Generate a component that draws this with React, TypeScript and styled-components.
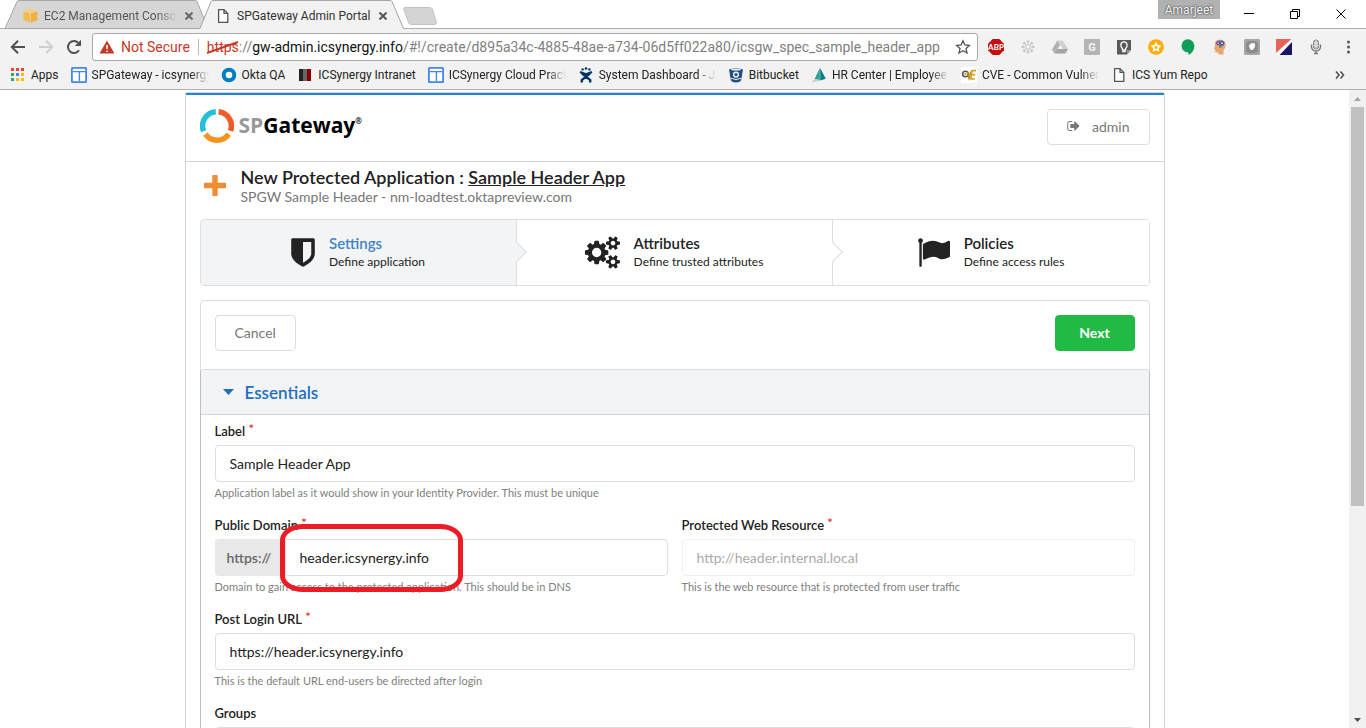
import React from 'react';
import styled, { createGlobalStyle, css } from 'styled-components';

const uiFont = 'Roboto, "Liberation Sans", sans-serif';
const pageFont = 'Lato, "Liberation Sans", sans-serif';

const GlobalStyle = createGlobalStyle`
  *, *::before, *::after { box-sizing: border-box; }
  body { margin: 0; background: #fff; }
  button, input { font: inherit; color: inherit; margin: 0; }
  svg { display: block; flex: none; }
`;

const Window = styled.div`
  display: flex;
  flex-direction: column;
  height: 100vh;
  min-height: 480px;
  overflow: hidden;
  background: #fff;
  font-family: ${uiFont};
`;

/* ---------- browser frame ---------- */

const TabStrip = styled.div`
  display: flex;
  justify-content: space-between;
  height: 29px;
  border-bottom: 1px solid #b0b0b0;
  flex: none;
`;

const Tabs = styled.div`
  display: flex;
  padding-left: 5px;
`;

const Tab = styled.div<{ $active?: boolean }>`
  position: relative;
  z-index: ${p => (p.$active ? 2 : 1)};
  display: flex;
  align-items: center;
  width: 208px;
  height: 29px;
  padding: 2px 16px 0 ${p => (p.$active ? '16px' : '18px')};
  margin-right: -14px;
  font-size: 12px;
  color: ${p => (p.$active ? '#333' : '#555')};
`;

const TabShape = styled.svg`
  position: absolute;
  inset: 0;
  z-index: -1;
`;

const TabTitle = styled.span<{ $fade?: boolean }>`
  flex: 1;
  min-width: 0;
  margin-left: 6px;
  overflow: hidden;
  white-space: nowrap;
  ${p => p.$fade && css`margin-right: 4px; mask-image: linear-gradient(to right, #000 85%, transparent);`}
`;

const IconButton = styled.button`
  display: flex;
  align-items: center;
  justify-content: center;
  flex: none;
  width: 16px;
  height: 16px;
  padding: 0;
  border: 0;
  background: none;
`;

const NewTab = styled(IconButton)`
  width: 34px;
  height: 18px;
  margin: 7px 0 0 10px;
`;

const WindowControls = styled.div`
  display: flex;
  align-items: flex-start;
  padding-right: 2px;
`;

const UserBadge = styled.button`
  height: 19px;
  width: 62px;
  margin-right: 6px;
  padding: 0;
  border: 0;
  background: #b1b1b1;
  color: #fff;
  font-size: 12px;
  text-shadow: 0 0 2px #333, 0 0 1px #333;
`;

const WindowButton = styled(IconButton)`
  width: 46px;
  height: 27px;
`;

const Toolbar = styled.div`
  display: flex;
  align-items: center;
  height: 36px;
  padding: 0 10px;
  background: #f2f2f2;
  flex: none;
`;

const Nav = styled.div`
  display: flex;
  gap: 12px;
  margin-right: 10px;
`;

const AddressBar = styled.div`
  display: flex;
  align-items: center;
  flex: 1;
  min-width: 0;
  height: 28px;
  padding: 0 6px;
  border: 1px solid #a9a9a9;
  border-radius: 3px;
  background: #fff;
  font-size: 14px;
`;

const NotSecure = styled.span`
  flex: none;
  margin-left: 6px;
  padding-right: 8px;
  border-right: 1px solid #b8b8b8;
  color: #c53929;
  white-space: nowrap;
`;

const Url = styled.span`
  flex: 1;
  min-width: 0;
  margin-left: 8px;
  overflow: hidden;
  white-space: nowrap;
  color: #808080;
  b { font-weight: 400; color: #111; }
`;

const Scheme = styled.span`
  display: inline-block;
  position: relative;
  color: #c53929;
`;

const Strike = styled.svg`
  position: absolute;
  left: -1px;
  top: 0;
`;

const Extensions = styled.div`
  display: flex;
  gap: 16px;
  margin-left: 10px;
`;

const Bookmarks = styled.nav`
  display: flex;
  align-items: center;
  height: 25px;
  padding: 0 20px 4px 9px;
  border-bottom: 1px solid #b0b0b0;
  background: #f2f2f2;
  flex: none;
`;

const Bookmark = styled.a<{ $wide?: boolean }>`
  display: flex;
  align-items: center;
  flex: none;
  gap: 5px;
  margin-right: 12px;
  color: #222;
  font-size: 12px;
  line-height: 16px;
  text-decoration: none;
  white-space: nowrap;
  span {
    overflow: hidden;
    ${p => p.$wide && css`width: 117px; mask-image: linear-gradient(to right, #000 84%, transparent);`}
  }
`;

const More = styled.button`
  margin-left: auto;
  padding: 0;
  border: 0;
  background: none;
  color: #444;
`;

const Viewport = styled.div`
  display: flex;
  flex: 1;
  min-height: 0;
`;

const Page = styled.main`
  flex: 1;
  min-width: 0;
  overflow: hidden;
  padding-top: 2px;
  font-family: ${pageFont};
  font-size: 14px;
  color: #222;
`;

const Scrollbar = styled.div`
  display: flex;
  flex-direction: column;
  align-items: center;
  width: 17px;
  background: #f1f1f1;
`;

const ScrollTrack = styled.div`
  flex: 1;
  width: 13px;
`;

const ScrollThumb = styled.div`
  height: 66%;
  background: #c1c1c1;
`;

const ScrollArrow = styled(IconButton)`
  width: 17px;
  height: 17px;
`;

/* ---------- application ---------- */

const Card = styled.div`
  width: 980px;
  max-width: calc(100% - 28px);
  margin: 0 auto;
  border: 1px solid #d4d4d5;
  border-radius: 3px;
`;

const AppHeader = styled.header`
  display: flex;
  align-items: flex-start;
  justify-content: space-between;
  padding: 14px 14px 16px;
  border-top: 2px solid #2185d0;
  border-bottom: 1px solid #d4d4d5;
`;

const Brand = styled.div`
  display: flex;
  align-items: flex-start;
  height: 34px;
  font: 700 21px/32px "Open Sans", sans-serif;
  color: #000;
  span { margin-left: 5px; color: #999; }
  sup { margin-top: 8px; font-size: 8px; line-height: 8px; }
`;

const Button = styled.button<{ $primary?: boolean }>`
  display: flex;
  align-items: center;
  justify-content: center;
  gap: 12px;
  min-width: 80px;
  height: 36px;
  padding: 0 19px 2px;
  border: 1px solid ${p => (p.$primary ? '#21ba45' : '#dedede')};
  border-radius: 4px;
  background: ${p => (p.$primary ? '#21ba45' : '#fff')};
  color: ${p => (p.$primary ? '#fff' : '#777')};
  font-weight: ${p => (p.$primary ? 700 : 400)};
`;

const TitleRow = styled.div`
  display: flex;
  align-items: center;
  gap: 15px;
  padding: 4px 18px 13px;
`;

const Title = styled.h1`
  margin: 0;
  font-size: 18px;
  line-height: 22px;
  font-weight: 600;
`;

const Subtitle = styled.p`
  margin: 0;
  line-height: 18px;
  color: #777;
`;

const Body = styled.div`
  padding: 0 14px 14px;
`;

const Steps = styled.nav`
  display: grid;
  grid-template-columns: repeat(3, 1fr);
  border: 1px solid #dededf;
  border-radius: 4px;
  overflow: hidden;
`;

const Step = styled.a<{ $active?: boolean }>`
  position: relative;
  display: flex;
  align-items: center;
  justify-content: center;
  gap: 14px;
  height: 65px;
  border-right: 1px solid #dededf;
  background: ${p => (p.$active ? '#f3f4f5' : '#fff')};
  color: #222;
  text-decoration: none;
  &:last-child { border-right: 0; }
  &:not(:last-child)::after {
    content: '';
    position: absolute;
    z-index: 1;
    top: 25px;
    right: -8px;
    width: 14px;
    height: 14px;
    border: solid #dededf;
    border-width: 1px 1px 0 0;
    background: inherit;
    transform: rotate(45deg);
  }
  strong {
    display: block;
    margin-bottom: 1px;
    font-size: 15px;
    line-height: 18px;
    font-weight: 600;
    color: ${p => (p.$active ? '#4183c4' : '#222')};
  }
  small { display: block; font-size: 12px; line-height: 18px; }
`;

const Segment = styled.section`
  margin-top: 14px;
  border: 1px solid #dededf;
  border-radius: 4px;
`;

const Actions = styled.div`
  display: flex;
  justify-content: space-between;
  padding: 14px 14px 18px;
`;

const Panel = styled.div`
  margin: 0 -1px;
  border: 1px solid #bdbdbf;
  border-top-color: #dededf;
  border-radius: 4px 4px 0 0;
`;

const PanelHead = styled.h2`
  margin: 0;
  border-bottom: 1px solid #d4d4d5;
  background: #f3f4f5;
  font-size: 17px;
  font-weight: 600;
  button {
    display: flex;
    align-items: center;
    gap: 11px;
    width: 100%;
    height: 44px;
    padding: 0 22px;
    border: 0;
    background: none;
    color: #1e70bf;
  }
`;

const Form = styled.form`
  display: grid;
  grid-template-columns: 1fr 1fr;
  gap: 12px 14px;
  padding: 7px 14px;
`;

const FieldBox = styled.div<{ $full?: boolean }>`
  position: relative;
  min-width: 0;
  ${p => p.$full && css`grid-column: 1 / -1;`}
  label {
    display: block;
    height: 19px;
    margin-bottom: 4px;
    font-size: 13px;
    line-height: 19px;
    font-weight: 600;
  }
  label sup { color: #db2828; line-height: 0; font-size: 14px; font-weight: 400; vertical-align: 2px; margin-left: 3px; }
  p {
    margin: 0;
    font-size: 11px;
    line-height: 22px;
    color: #808080;
    white-space: nowrap;
  }
`;

const InputRow = styled.div`
  display: flex;
  height: 37px;
`;

const Prefix = styled.span`
  display: flex;
  align-items: center;
  width: 70px;
  padding-left: 12px;
  border-radius: 4px 0 0 4px;
  background: #e8e8e8;
  color: #666;
  font-weight: 600;
`;

const Input = styled.input<{ $joined?: boolean; $faint?: boolean }>`
  flex: 1;
  min-width: 0;
  padding: 0 14px;
  border: 1px solid ${p => (p.$faint ? '#eee' : '#dededf')};
  border-radius: ${p => (p.$joined ? '0 4px 4px 0' : '4px')};
  background: #fff;
  color: #222;
  outline: 0;
  &::placeholder { color: #aaa; opacity: 1; }
`;

const Highlight = styled.div`
  position: absolute;
  left: 65px;
  top: 8px;
  width: 183px;
  height: 68px;
  border: 5px solid #ed1c24;
  border-radius: 23px / 16px;
  pointer-events: none;
`;

/* ---------- drawings ---------- */

const glyphs = {
  shield: {
    w: 1280,
    d: 'M1088 576v640h-448v-1137q119 63 213 137q235 184 235 360zM1280 1344v-768q0 -86 -33.5 -170.5t-83 -150t-118 -127.5t-126.5 -103t-121 -77.5t-89.5 -49.5t-42.5 -20q-12 -6 -26 -6t-26 6q-16 7 -42.5 20t-89.5 49.5t-121 77.5t-126.5 103t-118 127.5t-83 150t-33.5 170.5v768q0 26 19 45t45 19h1152q26 0 45 -19t19 -45z',
  },
  cogs: {
    w: 1920,
    d: 'M896 640q0 106 -75 181t-181 75t-181 -75t-75 -181t75 -181t181 -75t181 75t75 181zM1664 128q0 52 -38 90t-90 38t-90 -38t-38 -90q0 -53 37.5 -90.5t90.5 -37.5t90.5 37.5t37.5 90.5zM1664 1152q0 52 -38 90t-90 38t-90 -38t-38 -90q0 -53 37.5 -90.5t90.5 -37.5t90.5 37.5t37.5 90.5zM1280 731v-185q0 -10 -7 -19.5t-16 -10.5l-155 -24q-11 -35 -32 -76q34 -48 90 -115q7 -11 7 -20q0 -12 -7 -19q-23 -30 -82.5 -89.5t-78.5 -59.5q-11 0 -21 7l-115 90q-37 -19 -77 -31q-11 -108 -23 -155q-7 -24 -30 -24h-186q-11 0 -20 7.5t-10 17.5l-23 153q-34 10 -75 31l-118 -89q-7 -7 -20 -7q-11 0 -21 8q-144 133 -144 160q0 9 7 19q10 14 41 53t47 61q-23 44 -35 82l-152 24q-10 1 -17 9.5t-7 19.5v185q0 10 7 19.5t16 10.5l155 24q11 35 32 76q-34 48 -90 115q-7 11 -7 20q0 12 7 20q22 30 82 89t79 59q11 0 21 -7l115 -90q34 18 77 32q11 108 23 154q7 24 30 24h186q11 0 20 -7.5t10 -17.5l23 -153q34 -10 75 -31l118 89q8 7 20 7q11 0 21 -8q144 -133 144 -160q0 -8 -7 -19q-12 -16 -42 -54t-45 -60q23 -48 34 -82l152 -23q10 -2 17 -10.5t7 -19.5zM1920 198v-140q0 -16 -149 -31q-12 -27 -30 -52q51 -113 51 -138q0 -4 -4 -7q-122 -71 -124 -71q-8 0 -46 47t-52 68q-20 -2 -30 -2t-30 2q-14 -21 -52 -68t-46 -47q-2 0 -124 71q-4 3 -4 7q0 25 51 138q-18 25 -30 52q-149 15 -149 31v140q0 16 149 31q13 29 30 52q-51 113 -51 138q0 4 4 7q4 2 35 20t59 34t30 16q8 0 46 -46.5t52 -67.5q20 2 30 2t30 -2q51 71 92 112l6 2q4 0 124 -70q4 -3 4 -7q0 -25 -51 -138q17 -23 30 -52q149 -15 149 -31zM1920 1222v-140q0 -16 -149 -31q-12 -27 -30 -52q51 -113 51 -138q0 -4 -4 -7q-122 -71 -124 -71q-8 0 -46 47t-52 68q-20 -2 -30 -2t-30 2q-14 -21 -52 -68t-46 -47q-2 0 -124 71q-4 3 -4 7q0 25 51 138q-18 25 -30 52q-149 15 -149 31v140q0 16 149 31q13 29 30 52q-51 113 -51 138q0 4 4 7q4 2 35 20t59 34t30 16q8 0 46 -46.5t52 -67.5q20 2 30 2t30 -2q51 71 92 112l6 2q4 0 124 -70q4 -3 4 -7q0 -25 -51 -138q17 -23 30 -52q149 -15 149 -31z',
  },
  flag: {
    w: 1792,
    d: 'M320 1280q0 -72 -64 -110v-1266q0 -13 -9.5 -22.5t-22.5 -9.5h-64q-13 0 -22.5 9.5t-9.5 22.5v1266q-64 38 -64 110q0 53 37.5 90.5t90.5 37.5t90.5 -37.5t37.5 -90.5zM1792 1216v-763q0 -25 -12.5 -38.5t-39.5 -27.5q-215 -116 -369 -116q-61 0 -123.5 22t-108.5 48t-115.5 48t-142.5 22q-192 0 -464 -146q-17 -9 -33 -9q-26 0 -45 19t-19 45v742q0 32 31 55q21 14 79 43q236 120 421 120q107 0 200 -29t219 -88q38 -19 88 -19q54 0 117.5 21t110 47t88 47t54.5 21q26 0 45 -19t19 -45z',
  },
  signOut: {
    w: 1600,
    d: 'M640 96q0 -4 1 -20t0.5 -26.5t-3 -23.5t-10 -19.5t-20.5 -6.5h-320q-119 0 -203.5 84.5t-84.5 203.5v704q0 119 84.5 203.5t203.5 84.5h320q13 0 22.5 -9.5t9.5 -22.5q0 -4 1 -20t0.5 -26.5t-3 -23.5t-10 -19.5t-20.5 -6.5h-320q-66 0 -113 -47t-47 -113v-704q0 -66 47 -113t113 -47h288h11h13t11.5 -1t11.5 -3t8 -5.5t7 -9t2 -13.5zM1568 640q0 -26 -19 -45l-544 -544q-19 -19 -45 -19t-45 19t-19 45v288h-448q-26 0 -45 19t-19 45v384q0 26 19 45t45 19h448v288q0 26 19 45t45 19t45 -19l544 -544q19 -19 19 -45z',
  },
};

const Glyph = ({ name, size }: { name: keyof typeof glyphs; size: number }) => {
  const { w, d } = glyphs[name];
  return (
    <svg width={Math.round((w / 1792) * size)} height={size} viewBox={`0 -1536 ${w} 1792`} fill="currentColor" aria-hidden="true">
      <path transform="scale(1 -1)" d={d} />
    </svg>
  );
};

const Cross = ({ size, color, width = 2 }: { size: number; color: string; width?: number }) => (
  <svg width={size} height={size} viewBox={`0 0 ${size} ${size}`} stroke={color} strokeWidth={width}>
    <path d={`M.5 .5L${size - 0.5} ${size - 0.5}M${size - 0.5} .5L.5 ${size - 0.5}`} />
  </svg>
);

const PageIcon = () => (
  <svg width="16" height="16" viewBox="0 0 16 16" fill="#fff" stroke="#555" strokeWidth="1.3">
    <path d="M3.6 1.6H9l3.8 3.8v9H3.6zM9 1.6v3.8h3.8" />
  </svg>
);

const Layout = () => (
  <svg width="16" height="16" viewBox="0 0 16 16">
    <rect x="0.9" y="0.9" width="14.2" height="14.2" rx="0.6" fill="#fff" stroke="#4285f4" strokeWidth="1.8" />
    <path d="M2 4.6h12M8.4 4.6V14" stroke="#4285f4" strokeWidth="1.4" />
  </svg>
);

const AppsIcon = () => {
  const colors = ['#ea4335', '#ea4335', '#ea4335', '#34a853', '#4285f4', '#fbbc05', '#34a853', '#fbbc05', '#fbbc05'];
  return (
    <svg width="17" height="16" viewBox="0 0 17 16">
      {colors.map((c, i) => (
        <rect key={i} x={2 + (i % 3) * 5} y={1 + Math.floor(i / 3) * 5} width="3" height="3" fill={c} />
      ))}
    </svg>
  );
};

const Cube = () => (
  <svg width="15" height="15" viewBox="0 0 15 15">
    <path d="M.5 2.6L7.5.4l7 2.2-7 2z" fill="#f9cf77" />
    <path d="M.5 3.4l6.6 1.9v9.2L.5 12z" fill="#f5bd4e" />
    <path d="M14.5 3.4L7.9 5.3v9.2l6.600-2.500z" fill="#f1b13c" />
  </svg>
);

const bookmarks: { label: string; wide?: boolean; icon: React.ReactNode }[] = [
  { label: 'Apps', icon: <AppsIcon /> },
  { label: 'SPGateway - icsynergy', wide: true, icon: <Layout /> },
  {
    label: 'Okta QA',
    icon: (
      <svg width="16" height="16" viewBox="0 0 16 16"><circle cx="8" cy="8" r="5.3" fill="#fff" stroke="#007dc1" strokeWidth="4" /></svg>
    ),
  },
  {
    label: 'ICSynergy Intranet',
    icon: (
      <svg width="16" height="16" viewBox="0 0 16 16">
        <path d="M2 2h4v12H2z" fill="#222" /><path d="M6 2h4v12H6z" fill="#666" /><path d="M10 2h4v12h-4z" fill="#8b0000" />
      </svg>
    ),
  },
  { label: 'ICSynergy Cloud Pract', wide: true, icon: <Layout /> },
  {
    label: 'System Dashboard - JI',
    wide: true,
    icon: (
      <svg width="16" height="16" viewBox="0 0 16 16" fill="none" stroke="#003366" strokeWidth="2.4">
        <path d="M2 5L8 7.400 14 5M3.800 15.500V13L8 9.600 12 6.500M12.200 15.500V13L8 9.600 4 6.500" />
        <g fill="#003366" stroke="none"><circle cx="4.600" cy="2.400" r="1.200" /><circle cx="8" cy="1.500" r="1.300" /><circle cx="11.400" cy="2.400" r="1.200" /></g>
      </svg>
    ),
  },
  {
    label: 'Bitbucket',
    icon: (
      <svg width="16" height="16" viewBox="0 0 16 16">
        <path d="M1 2.5Q8-.5 15 2.5L13.6 11 12.8 14Q8 17 3.2 14L2.4 11z" fill="#205081" />
        <ellipse cx="8" cy="2.6" rx="5" ry="1" fill="#f2f2f2" />
        <circle cx="8" cy="7.6" r="2.4" fill="#205081" stroke="#f2f2f2" strokeWidth="1.4" />
        <path d="M2.8 11.2Q8 13.8 13.2 11.2" stroke="#f2f2f2" fill="none" />
      </svg>
    ),
  },
  {
    label: 'HR Center | Employee',
    wide: true,
    icon: (
      <svg width="16" height="16" viewBox="0 0 16 16">
        <path d="M8.8 1v12L3.6 12z" fill="#2aa198" /><path d="M9.2 1l5.6 10.8-5.6 1.6z" fill="#0b7f83" /><path d="M0 15.4l4-3.4 6 1.5z" fill="#c6ced3" />
      </svg>
    ),
  },
  {
    label: 'CVE - Common Vulner',
    wide: true,
    icon: (
      <svg width="16" height="16" viewBox="0 0 16 16" fill="none">
        <path d="M0 0h16v16H0z" fill="#fff" />
        <circle cx="4.4" cy="7" r="2.8" stroke="#5a5a4a" strokeWidth="1.6" />
        <path d="M6.4 5l1.6 6 2-6.4" stroke="#b99025" strokeWidth="1.8" />
        <path d="M15 3.6h-4l-1.2 8.2h4M10.6 7.6h3.6" stroke="#d6a52c" strokeWidth="1.8" />
        <circle cx="4.4" cy="7" r="1" fill="#b99025" />
      </svg>
    ),
  },
  { label: 'ICS Yum Repo', icon: <PageIcon /> },
];

const extensions: { name: string; icon: React.ReactNode }[] = [
  {
    name: 'Ad blocker',
    icon: (
      <svg width="16" height="16" viewBox="0 0 16 16">
        <path d="M4.7 0h6.6L16 4.7v6.6L11.3 16H4.7L0 11.3V4.7z" fill="#c70d0d" />
        <text x="8" y="10.700" textAnchor="middle" fontSize="8" fontWeight="700" fontFamily="Lato, sans-serif" fill="#fff">ABP</text>
      </svg>
    ),
  },
  {
    name: 'Flower',
    icon: (
      <svg width="16" height="16" viewBox="0 0 16 16" fill="#c8c8c8" stroke="#c8c8c8">
        <circle cx="8" cy="8" r="2" fill="#fff" />
        {[0, 45, 90, 135, 180, 225, 270, 315].map(a => (
          <g key={a} transform={`rotate(${a} 8 8)`}><path d="M8 6V3" /><circle cx="8" cy="2.800" r="1.400" stroke="none" /></g>
        ))}
      </svg>
    ),
  },
  {
    name: 'Drive',
    icon: (
      <svg width="16" height="16" viewBox="0 0 16 16">
        <path d="M5.4 1.5h5.2L16 10h-5z" fill="#cfcfcf" /><path d="M5.4 1.5L0 10.4l2.6 4.1L8 6z" fill="#b0b0b0" /><path d="M5.2 10H16l-2.6 4.5H2.6z" fill="#a4a4a4" />
      </svg>
    ),
  },
  {
    name: 'G',
    icon: (
      <svg width="16" height="16" viewBox="0 0 16 16">
        <rect width="16" height="16" rx="1" fill="#b5b5b5" />
        <text x="8" y="12" textAnchor="middle" fontSize="11" fontWeight="700" fontFamily="Roboto, sans-serif" fill="#f4f4f4">G</text>
      </svg>
    ),
  },
  {
    name: 'Keep',
    icon: (
      <svg width="16" height="16" viewBox="0 0 16 16">
        <path d="M1 1h14v10l-4 4.500H1z" fill="#5a5a5a" /><path d="M15 11l-4 4.500V11z" fill="#999" />
        <path d="M6.400 9.400Q4.600 8 4.900 6A3.100 3.100 0 0 1 11.100 6Q11.400 8 9.600 9.400V11H6.400zM6.200 12.700h3.600" fill="none" stroke="#fff" strokeWidth="1.300" />
      </svg>
    ),
  },
  {
    name: 'Star',
    icon: (
      <svg width="16" height="16" viewBox="0 0 16 16">
        <circle cx="8" cy="8" r="7.800" fill="#ffab00" />
        <path d="M8 2.6l1.7 3.5 3.8.5-2.8 2.7.7 3.8L8 11.300l-3.400 1.800.7-3.800-2.800-2.700 3.800-.5z" fill="#fff" />
        <path d="M8 6.200l.7 1.400 1.500.2-1.100 1 .3 1.500L8 9.600l-1.400.7.3-1.500-1.100-1 1.500-.2z" fill="#ffab00" />
      </svg>
    ),
  },
  {
    name: 'Chat',
    icon: (
      <svg width="16" height="16" viewBox="0 0 16 16"><path d="M7.800 .2a6.600 6.600 0 0 1 6.600 6.600C14.400 11 12 14.500 8.400 16v-2.600A6.600 6.600 0 1 1 7.800 .2z" fill="#0f9d58" /></svg>
    ),
  },
  {
    name: 'Thinking head',
    icon: (
      <svg width="16" height="16" viewBox="0 0 16 16">
        <path d="M3 3Q5 .5 9 .8 13.600 1.500 13.600 6 13.600 9 11.500 11v4.500H6.500l-.2-2H3.500L3 10.500 2 9.500 3 7z" fill="#eca470" />
        <path d="M4 3.500Q6 .5 10 1.200L12.800 3l-.8 4-3 .5-4.500-2z" fill="#9a8378" />
        <g fill="#eee" strokeWidth="1.200"><circle cx="6.200" cy="4" r="1.400" stroke="#7a3aa0" /><circle cx="10" cy="4.200" r="1.500" stroke="#3358b8" /><circle cx="8.400" cy="7.200" r=".9" stroke="#4a8a4a" /></g>
      </svg>
    ),
  },
  {
    name: 'Recorder',
    icon: (
      <svg width="16" height="16" viewBox="0 0 16 16">
        <rect width="16" height="16" rx="1.500" fill="#a6a6a6" /><rect x="2" y="2" width="12" height="12" rx="4" fill="#8c8c8c" />
        <path d="M5 6q3-3 6-1.500Q11.500 9 8.500 11 5.500 11.500 5 6z" fill="#fff" />
      </svg>
    ),
  },
  {
    name: 'Flag',
    icon: (
      <svg width="16" height="16" viewBox="0 0 16 16">
        <path d="M0 0h16v16H0z" fill="#fff" /><path d="M0 0h15.500L0 14z" fill="#e8645a" /><path d="M16 3v13H3.500z" fill="#1b1464" />
      </svg>
    ),
  },
  {
    name: 'Microphone',
    icon: (
      <svg width="16" height="16" viewBox="0 0 16 16" fill="none" stroke="#777">
        <rect x="5.500" y="1" width="5" height="9" rx="2.500" fill="#bbb" /><path d="M8 1v9M5.500 4h5M5.500 6.500h5" stroke="#eee" strokeWidth=".8" />
        <path d="M3.500 5.500V8q.5 4 4.500 4t4.500-4V5.500M8 12v3M6 14.500h4" strokeWidth="1.400" />
      </svg>
    ),
  },
];

const Ring = () => (
  <svg width="34" height="34" viewBox="0 0 34 34" fill="none" strokeWidth="5.500">
    <path d="M15.800 2.800A14.200 14.200 0 0 0 3.600 22.200" stroke="#25bfdc" />
    <path d="M18.600 2.800A14.200 14.200 0 0 1 30.500 21.900" stroke="#f15a29" />
    <path d="M5.400 25.200A14.200 14.200 0 0 0 28.700 25.100" stroke="#f7941e" />
  </svg>
);

const Plus = () => (
  <svg width="22" height="22" viewBox="0 0 22 22">
    <path d="M9.300 0h3.400a1 1 0 0 1 1 1v6.800H21a1 1 0 0 1 1 1v3.400a1 1 0 0 1-1 1h-7.300V20a1 1 0 0 1-1 1H9.300a1 1 0 0 1-1-1v-6.800H1a1 1 0 0 1-1-1V8.800a1 1 0 0 1 1-1h7.300V1a1 1 0 0 1 1-1z" fill="#f08d31" />
  </svg>
);

const tabPath = (active: boolean) => (
  <TabShape width="208" height="29" viewBox="0 0 208 29">
    <path
      d={active ? 'M0 29L1 28.500 12 1.500Q12.500.5 14 .5H191Q192.500.5 193 1.500L204.500 28 206 29z' : 'M0 28.500L12 1.500Q12.500.5 14 .5H190Q191.500.5 192 1.500L203 28.500z'}
      fill={active ? '#f2f2f2' : '#d6d6d6'}
    />
    <path
      d={active ? 'M0 28.500H1L12 1.500Q12.500.5 14 .5H191Q192.500.5 193 1.500L204.500 28.500H208' : 'M0 28.500L12 1.500Q12.500.5 14 .5H190Q191.500.5 192 1.500L203 28.500H0'}
      fill="none"
      stroke="#a6a6a6"
    />
  </TabShape>
);

/* ---------- form pieces ---------- */

interface FieldProps {
  id: string;
  label: string;
  required?: boolean;
  full?: boolean;
  value?: string;
  placeholder?: string;
  prefix?: string;
  help?: string;
  marked?: boolean;
}

const Field = ({ id, label, required, full, value, placeholder, prefix, help, marked }: FieldProps) => (
  <FieldBox $full={full}>
    <label htmlFor={id}>{label}{required && <sup>*</sup>}</label>
    <InputRow>
      {prefix && <Prefix>{prefix}</Prefix>}
      <Input id={id} type="text" defaultValue={value} placeholder={placeholder} $joined={!!prefix} $faint={!!placeholder} />
    </InputRow>
    {help && <p>{help}</p>}
    {marked && <Highlight />}
  </FieldBox>
);

const steps: { icon: keyof typeof glyphs; title: string; text: string }[] = [
  { icon: 'shield', title: 'Settings', text: 'Define application' },
  { icon: 'cogs', title: 'Attributes', text: 'Define trusted attributes' },
  { icon: 'flag', title: 'Policies', text: 'Define access rules' },
];

export default function App() {
  return (
    <Window>
      <GlobalStyle />
      <TabStrip>
        <Tabs>
          <Tab>
            {tabPath(false)}
            <Cube />
            <TabTitle $fade>EC2 Management Consol</TabTitle>
            <IconButton aria-label="Close tab"><Cross size={8} color="#666" /></IconButton>
          </Tab>
          <Tab $active>
            {tabPath(true)}
            <PageIcon />
            <TabTitle>SPGateway Admin Portal</TabTitle>
            <IconButton aria-label="Close tab"><Cross size={8} color="#555" /></IconButton>
          </Tab>
          <NewTab aria-label="New tab">
            <svg width="34" height="18" viewBox="0 0 34 18"><path d="M2 .5h24.500q2 0 2.800 1.500l4 13q.5 2-1.500 2.500H8.500q-2 0-2.800-1.500L.8 2.500Q.4.800 2 .5z" fill="#d4d4d4" stroke="#c2c2c2" /></svg>
          </NewTab>
        </Tabs>
        <WindowControls>
          <UserBadge>Amarjeet</UserBadge>
          <WindowButton aria-label="Minimize"><svg width="10" height="10" viewBox="0 0 10 10"><path d="M0 4.500h10" stroke="#000" /></svg></WindowButton>
          <WindowButton aria-label="Restore">
            <svg width="10" height="10" viewBox="0 0 10 10" fill="none" stroke="#000"><path d="M.5 2.500h7v7h-7zM2.500 2.500v-2h7v7h-2" /></svg>
          </WindowButton>
          <WindowButton aria-label="Close"><Cross size={10} color="#000" width={1} /></WindowButton>
        </WindowControls>
      </TabStrip>

      <Toolbar>
        <Nav>
          <IconButton aria-label="Back">
            <svg width="16" height="16" viewBox="0 0 16 16" fill="none" stroke="#505050" strokeWidth="2"><path d="M15 8H2.500M8 1.800L1.800 8 8 14.200" /></svg>
          </IconButton>
          <IconButton aria-label="Forward">
            <svg width="16" height="16" viewBox="0 0 16 16" fill="none" stroke="#d0d0d0" strokeWidth="2"><path d="M1 8h12.500M8 1.800L14.200 8 8 14.200" /></svg>
          </IconButton>
          <IconButton aria-label="Reload">
            <svg width="16" height="16" viewBox="0 0 16 16"><path d="M13 11.300A6 6 0 1 1 12.400 3.900" fill="none" stroke="#505050" strokeWidth="2" /><path d="M15 .8V7H8.800z" fill="#505050" /></svg>
          </IconButton>
        </Nav>
        <AddressBar>
          <svg width="16" height="16" viewBox="0 0 16 16"><path d="M8 1.500l7.500 13H.5z" fill="#c53929" /><path d="M8 6v4M8 11.500V13" stroke="#fff" strokeWidth="1.500" /></svg>
          <NotSecure>Not Secure</NotSecure>
          <Url>
            <Scheme>
              https
              <Strike width="34" height="16" viewBox="0 0 34 16"><path d="M1 14L32 3" stroke="#c53929" strokeWidth="2" /></Strike>
            </Scheme>
            ://<b>gw-admin.icsynergy.info</b>/#!/create/d895a34c-4885-48ae-a734-06d5ff022a80/icsgw_spec_sample_header_app
          </Url>
          <IconButton aria-label="Bookmark this page">
            <svg width="16" height="16" viewBox="0 0 16 16" fill="none" stroke="#555" strokeWidth="1.300"><path d="M8 1.800l1.900 4.200 4.500.5-3.400 3 1 4.500L8 11.700 4 14l1-4.500-3.400-3 4.500-.5z" /></svg>
          </IconButton>
        </AddressBar>
        <Extensions>
          {extensions.map(e => <IconButton key={e.name} aria-label={e.name}>{e.icon}</IconButton>)}
          <IconButton aria-label="Menu">
            <svg width="16" height="16" viewBox="0 0 16 16" fill="#555"><circle cx="8.500" cy="3" r="1.500" /><circle cx="8.500" cy="8" r="1.500" /><circle cx="8.500" cy="13" r="1.500" /></svg>
          </IconButton>
        </Extensions>
      </Toolbar>

      <Bookmarks>
        {bookmarks.map(b => (
          <Bookmark key={b.label} href="#" $wide={b.wide}>{b.icon}<span>{b.label}</span></Bookmark>
        ))}
        <More aria-label="More bookmarks">
          <svg width="12" height="10" viewBox="0 0 12 10" fill="none" stroke="#505050" strokeWidth="1.600"><path d="M2 1.500L5 5 2 8.500M6.500 1.500L9.500 5l-3 3.500" /></svg>
        </More>
      </Bookmarks>

      <Viewport>
        <Page>
          <Card>
            <AppHeader>
              <Brand><Ring /><span>SP</span>Gateway<sup>®</sup></Brand>
              <Button><Glyph name="signOut" size={14} />admin</Button>
            </AppHeader>
            <TitleRow>
              <Plus />
              <div>
                <Title>New Protected Application : <u>Sample Header App</u></Title>
                <Subtitle>SPGW Sample Header - nm-loadtest.oktapreview.com</Subtitle>
              </div>
            </TitleRow>
            <Body>
              <Steps>
                {steps.map((s, i) => (
                  <Step key={s.title} href="#" $active={i === 0}>
                    <Glyph name={s.icon} size={33} />
                    <div><strong>{s.title}</strong><small>{s.text}</small></div>
                  </Step>
                ))}
              </Steps>
              <Segment>
                <Actions>
                  <Button>Cancel</Button>
                  <Button $primary>Next</Button>
                </Actions>
                <Panel>
                  <PanelHead>
                    <button>
                      <svg width="11" height="6" viewBox="0 0 11 6"><path d="M0 0h11L5.500 6z" fill="#1e70bf" /></svg>
                      Essentials
                    </button>
                  </PanelHead>
                  <Form>
                    <Field id="label" label="Label" required full value="Sample Header App" help="Application label as it would show in your Identity Provider. This must be unique" />
                    <Field id="domain" label="Public Domain" required prefix="https://" value="header.icsynergy.info" help="Domain to gain access to the protected application. This should be in DNS" marked />
                    <Field id="resource" label="Protected Web Resource" required placeholder="http://header.internal.local" help="This is the web resource that is protected from user traffic" />
                    <Field id="login" label="Post Login URL" required full value="https://header.icsynergy.info" help="This is the default URL end-users be directed after login" />
                    <Field id="groups" label="Groups" full />
                  </Form>
                </Panel>
              </Segment>
            </Body>
          </Card>
        </Page>
        <Scrollbar>
          <ScrollArrow aria-label="Scroll up"><svg width="7" height="4" viewBox="0 0 7 4"><path d="M0 4h7L3.500 0z" fill="#a3a3a3" /></svg></ScrollArrow>
          <ScrollTrack><ScrollThumb /></ScrollTrack>
          <ScrollArrow aria-label="Scroll down"><svg width="7" height="4" viewBox="0 0 7 4"><path d="M0 0h7L3.500 4z" fill="#505050" /></svg></ScrollArrow>
        </Scrollbar>
      </Viewport>
    </Window>
  );
}
